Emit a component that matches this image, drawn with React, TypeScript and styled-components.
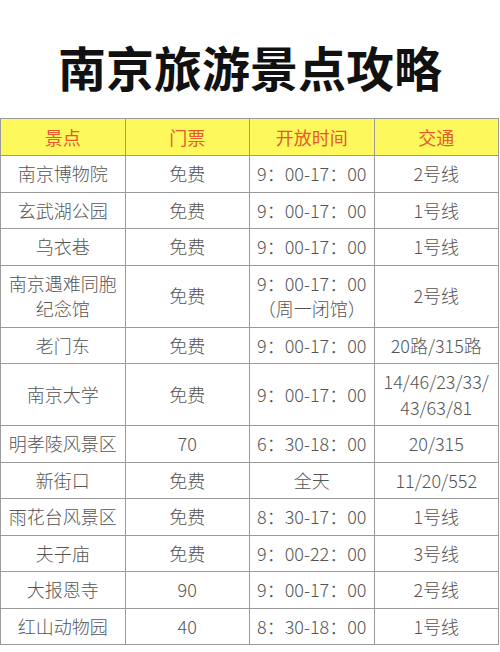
import React from 'react';
import styled, { createGlobalStyle } from 'styled-components';

const GlobalStyle = createGlobalStyle`
  html, body {
    margin: 0;
    padding: 0;
    background: #ffffff;
  }
  body {
    font-family: "Noto Sans CJK SC", "Noto Sans", sans-serif;
  }
`;

const Page = styled.div`
  width: 500px;
  height: 652px;
  overflow: hidden;
  background: #ffffff;
`;

const Title = styled.h1`
  margin: 0;
  padding: 42px 0 28px;
  height: 48px;
  line-height: 48px;
  font-size: 48px;
  font-weight: 700;
  color: #111111;
  text-align: center;
  letter-spacing: 0;
`;

const Table = styled.table`
  width: 499px;
  table-layout: fixed;
  border-collapse: collapse;
  border: 1px solid #9a9a9a;
`;

const HeadCell = styled.th`
  background: #fdf85c;
  color: #e85a2a;
  font-size: 18px;
  font-weight: 400;
  line-height: 26px;
  padding: 5px 0;
  border: 1px solid #9a9a9a;
  text-align: center;
`;

const Cell = styled.td`
  color: #555555;
  font-size: 18px;
  font-weight: 300;
  line-height: 25.5px;
  padding: 5px 0;
  border: 1px solid #9a9a9a;
  text-align: center;
  vertical-align: middle;
  white-space: nowrap;
`;

interface Row {
  name: string[];
  ticket: string;
  hours: string[];
  traffic: string[];
}

const rows: Row[] = [
  { name: ['南京博物院'], ticket: '免费', hours: ['9：00-17：00'], traffic: ['2号线'] },
  { name: ['玄武湖公园'], ticket: '免费', hours: ['9：00-17：00'], traffic: ['1号线'] },
  { name: ['乌衣巷'], ticket: '免费', hours: ['9：00-17：00'], traffic: ['1号线'] },
  {
    name: ['南京遇难同胞', '纪念馆'],
    ticket: '免费',
    hours: ['9：00-17：00', '（周一闭馆）'],
    traffic: ['2号线'],
  },
  { name: ['老门东'], ticket: '免费', hours: ['9：00-17：00'], traffic: ['20路/315路'] },
  {
    name: ['南京大学'],
    ticket: '免费',
    hours: ['9：00-17：00'],
    traffic: ['14/46/23/33/', '43/63/81'],
  },
  { name: ['明孝陵风景区'], ticket: '70', hours: ['6：30-18：00'], traffic: ['20/315'] },
  { name: ['新街口'], ticket: '免费', hours: ['全天'], traffic: ['11/20/552'] },
  { name: ['雨花台风景区'], ticket: '免费', hours: ['8：30-17：00'], traffic: ['1号线'] },
  { name: ['夫子庙'], ticket: '免费', hours: ['9：00-22：00'], traffic: ['3号线'] },
  { name: ['大报恩寺'], ticket: '90', hours: ['9：00-17：00'], traffic: ['2号线'] },
  { name: ['红山动物园'], ticket: '40', hours: ['8：30-18：00'], traffic: ['1号线'] },
];

const Lines = ({ lines }: { lines: string[] }) => (
  <>
    {lines.map((line, i) => (
      <React.Fragment key={i}>
        {i > 0 && <br />}
        {line}
      </React.Fragment>
    ))}
  </>
);

const App = () => (
  <Page>
    <GlobalStyle />
    <Title>南京旅游景点攻略</Title>
    <Table>
      <thead>
        <tr>
          <HeadCell>景点</HeadCell>
          <HeadCell>门票</HeadCell>
          <HeadCell>开放时间</HeadCell>
          <HeadCell>交通</HeadCell>
        </tr>
      </thead>
      <tbody>
        {rows.map(row => (
          <tr key={row.name.join('')}>
            <Cell>
              <Lines lines={row.name} />
            </Cell>
            <Cell>{row.ticket}</Cell>
            <Cell>
              <Lines lines={row.hours} />
            </Cell>
            <Cell>
              <Lines lines={row.traffic} />
            </Cell>
          </tr>
        ))}
      </tbody>
    </Table>
  </Page>
);

export default App;
